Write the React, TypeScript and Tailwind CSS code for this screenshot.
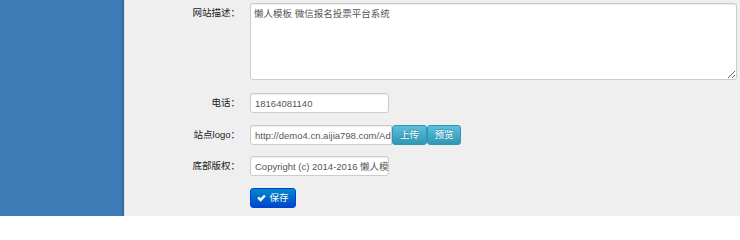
import React from "react";

const font = "font-['Liberation_Sans','Noto_Sans_CJK_SC',sans-serif]";

function Label({ children }: { children: React.ReactNode }) {
  return (
    <div className="w-[114px] shrink-0 pt-[3px] text-right text-[9.5px] leading-[14px] text-[#222]">
      {children}
    </div>
  );
}

const inputCls =
  "h-[20px] rounded-[3px] border border-[#cccccc] bg-white pl-[4px] pr-0 text-[9.5px] text-[#555] outline-none shadow-[inset_0_1px_1px_rgba(0,0,0,0.075)]";

export default function App() {
  return (
    <div className={`flex h-[216px] w-[740px] overflow-hidden ${font}`}>
      <div className="w-[122px] shrink-0 bg-[#3e7cb7]" />
      <div className="w-[2px] shrink-0 bg-[#356ea6]" />
      <div className="w-[1px] shrink-0 bg-[#d9d9d9]" />
      <div className="w-[1px] shrink-0 bg-[#f8f8f8]" />
      <div className="flex-1 bg-[#efefef] pt-[3px]">
        <div className="flex gap-[10px]">
          <Label>网站描述：</Label>
          <textarea
            readOnly
            defaultValue="懒人模板 微信报名投票平台系统"
            className="h-[77px] w-[487px] resize rounded-[3px] border border-[#cccccc] bg-white px-[3px] py-[3px] text-[9.5px] leading-[14px] text-[#555] outline-none shadow-[inset_0_1px_1px_rgba(0,0,0,0.075)]"
          />
        </div>

        <div className="mt-[13px] flex gap-[10px]">
          <Label>电话：</Label>
          <input readOnly value="18164081140" className={`${inputCls} w-[139px]`} />
        </div>

        <div className="mt-[12px] flex gap-[10px]">
          <Label>站点logo：</Label>
          <div className="flex">
            <input
              readOnly
              value="http://demo4.cn.aijia798.com/Admin/Public/logo.png"
              className={`${inputCls} w-[142px] rounded-r-none`}
            />
            <button className="h-[20px] w-[35px] rounded-[3px] border border-[#2f96b4] bg-gradient-to-b from-[#5bc0de] to-[#2f96b4] text-[9.5px] text-white [text-shadow:0_-1px_0_rgba(0,0,0,0.25)]">
              上传
            </button>
            <button className="h-[20px] w-[34px] rounded-[3px] border border-[#2f96b4] bg-gradient-to-b from-[#5bc0de] to-[#2f96b4] text-[9.5px] text-white [text-shadow:0_-1px_0_rgba(0,0,0,0.25)]">
              预览
            </button>
          </div>
        </div>

        <div className="mt-[11px] flex gap-[10px]">
          <Label>底部版权：</Label>
          <input
            readOnly
            value="Copyright (c) 2014-2016 懒人模板 版权所有"
            className={`${inputCls} w-[139px]`}
          />
        </div>

        <div className="mt-[12px] flex gap-[10px]">
          <div className="w-[114px] shrink-0" />
          <button className="flex h-[20px] w-[46px] items-center justify-center gap-[3px] rounded-[3px] border border-[#0044cc] bg-gradient-to-b from-[#0088cc] to-[#0044cc] text-[9.5px] text-white">
            <svg width="9" height="8" viewBox="0 0 16 14" fill="white">
              <path d="M0.5 7.5 L3.5 4.5 L6.5 7.5 L12.5 1 L15.5 4 L6.5 13.5 Z" />
            </svg>
            保存
          </button>
        </div>
      </div>
    </div>
  );
}
